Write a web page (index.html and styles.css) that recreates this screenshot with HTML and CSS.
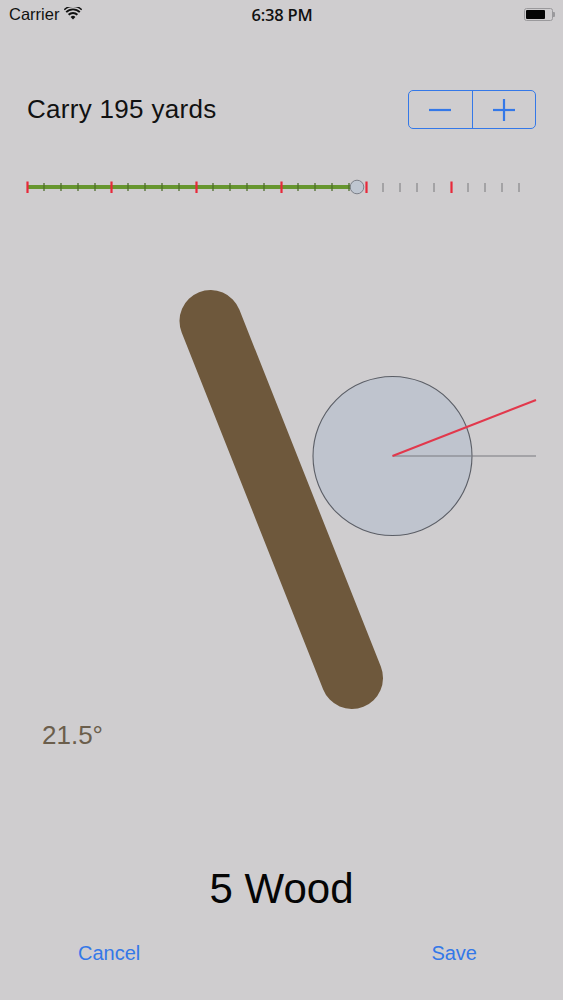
FILE: index.html
```html
<!DOCTYPE html>
<html>
<head>
<meta charset="utf-8">
<link rel="stylesheet" href="styles.css">
</head>
<body class="screen">
  <div class="statusbar">
    <div class="sb-left">
      <span class="carrier">Carrier</span>
      <svg class="wifi" width="18" height="13" viewBox="0 0 18 13">
        <path d="M9 12.5 L6.6 9.9 A3.4 3.4 0 0 1 11.4 9.9 Z" fill="#111"/>
        <path d="M4.6 7.8 A6.3 6.3 0 0 1 13.4 7.8" stroke="#111" stroke-width="1.9" fill="none"/>
        <path d="M2.2 5.2 A9.6 9.6 0 0 1 15.8 5.2" stroke="#111" stroke-width="1.9" fill="none"/>
        <path d="M0.3 2.8 A12.4 12.4 0 0 1 17.7 2.8" stroke="#111" stroke-width="1.6" fill="none"/>
      </svg>
    </div>
    <div class="sb-time">6:38 PM</div>
    <div class="sb-right">
      <div class="battery"><div class="battery-fill"></div></div>
      <div class="battery-tip"></div>
    </div>
  </div>

  <div class="header">
    <div class="carry">Carry 195 yards</div>
    <div class="stepper">
      <div class="step">
        <svg width="22" height="4" viewBox="0 0 22 4"><line x1="0" y1="2" x2="22" y2="2" stroke="#3478e8" stroke-width="2.2"/></svg>
      </div>
      <div class="step step-right">
        <svg width="22" height="22" viewBox="0 0 22 22"><line x1="0" y1="11" x2="22" y2="11" stroke="#3478e8" stroke-width="2.2"/><line x1="11" y1="0" x2="11" y2="22" stroke="#3478e8" stroke-width="2.2"/></svg>
      </div>
    </div>
  </div>

  <svg class="slider" width="563" height="24" viewBox="0 0 563 24">
    <line x1="27" y1="12" x2="357" y2="12" stroke="#67962f" stroke-width="4"/>
    <g stroke="#4f6e2c" stroke-width="1.3">
      <line x1="44" y1="8" x2="44" y2="16"/><line x1="61" y1="8" x2="61" y2="16"/><line x1="78" y1="8" x2="78" y2="16"/><line x1="95" y1="8" x2="95" y2="16"/>
      <line x1="128" y1="8" x2="128" y2="16"/><line x1="145" y1="8" x2="145" y2="16"/><line x1="162" y1="8" x2="162" y2="16"/><line x1="179" y1="8" x2="179" y2="16"/>
      <line x1="213" y1="8" x2="213" y2="16"/><line x1="230" y1="8" x2="230" y2="16"/><line x1="247" y1="8" x2="247" y2="16"/><line x1="264" y1="8" x2="264" y2="16"/>
      <line x1="298" y1="8" x2="298" y2="16"/><line x1="315" y1="8" x2="315" y2="16"/><line x1="332" y1="8" x2="332" y2="16"/><line x1="349" y1="8" x2="349" y2="16"/>
    </g>
    <g stroke="#8d8c8f" stroke-width="1.3">
      <line x1="383" y1="8" x2="383" y2="17"/><line x1="400" y1="8" x2="400" y2="17"/><line x1="417" y1="8" x2="417" y2="17"/><line x1="434" y1="8" x2="434" y2="17"/>
      <line x1="468" y1="8" x2="468" y2="17"/><line x1="485" y1="8" x2="485" y2="17"/><line x1="502" y1="8" x2="502" y2="17"/><line x1="519" y1="8" x2="519" y2="17"/>
    </g>
    <g stroke="#e8283a" stroke-width="2.2">
      <line x1="27.5" y1="6.5" x2="27.5" y2="18"/><line x1="111.5" y1="6.5" x2="111.5" y2="18"/><line x1="196.5" y1="6.5" x2="196.5" y2="18"/>
      <line x1="281.5" y1="6.5" x2="281.5" y2="18"/><line x1="366.5" y1="6.5" x2="366.5" y2="18"/><line x1="451.5" y1="6.5" x2="451.5" y2="18"/>
    </g>
    <circle cx="357" cy="12" r="6.8" fill="#bfc6d1" stroke="#7d8089" stroke-width="1"/>
  </svg>

  <svg class="stage" width="563" height="516" viewBox="0 0 563 516">
    <line x1="210.5" y1="122" x2="352" y2="479" stroke="#6e583c" stroke-width="62" stroke-linecap="round"/>
    <circle cx="392.5" cy="257" r="79.5" fill="#bfc4ce" stroke="#5b5e66" stroke-width="1.1"/>
    <line x1="392.5" y1="257" x2="536" y2="257" stroke="#7a7b80" stroke-width="1.2"/>
    <line x1="392.5" y1="257" x2="536" y2="201" stroke="#e2384c" stroke-width="2"/>
  </svg>

  <div class="angle">21.5°</div>
  <div class="club-name">5 Wood</div>
  <div class="actions">
    <span class="action action-cancel">Cancel</span>
    <span class="action action-save">Save</span>
  </div>
</body>
</html>
```
FILE: styles.css
```css
html, body {
  margin: 0;
  padding: 0;
}
.screen {
  width: 563px;
  height: 1000px;
  background: #cfcdcf;
  font-family: "Liberation Sans", Arial, sans-serif;
  color: #111;
  overflow: hidden;
}
.statusbar {
  height: 28px;
  display: flex;
  align-items: center;
  justify-content: space-between;
  padding: 1px 8px 0 9px;
  box-sizing: border-box;
  font-size: 16.5px;
  line-height: 27px;
}
.sb-left {
  width: 120px;
  display: flex;
  align-items: center;
  gap: 5px;
}
.wifi {
  margin-top: -2px;
}
.sb-time {
  font-weight: 600;
  font-size: 16.5px;
  font-family: "Open Sans", "Liberation Sans", sans-serif;
  letter-spacing: -0.2px;
}
.sb-right {
  width: 120px;
  display: flex;
  justify-content: flex-end;
  align-items: center;
}
.battery {
  width: 29px;
  height: 13px;
  border: 1px solid #9a999c;
  border-radius: 2.5px;
  box-sizing: border-box;
  padding: 1px;
  display: flex;
}
.battery-fill {
  width: 19px;
  background: #050505;
  border-radius: 1px;
}
.battery-tip {
  width: 2px;
  height: 5px;
  background: #9a999c;
  border-radius: 0 1px 1px 0;
}
.header {
  margin-top: 62px;
  height: 39px;
  display: flex;
  align-items: center;
  justify-content: space-between;
  padding: 0 27px 0 27px;
}
.carry {
  font-size: 26px;
  line-height: 39px;
  letter-spacing: 0.3px;
}
.stepper {
  width: 128px;
  height: 39px;
  box-sizing: border-box;
  border: 1.6px solid #3478e8;
  border-radius: 5px;
  display: flex;
}
.step {
  flex: 1;
  display: flex;
  align-items: center;
  justify-content: center;
}
.step-right {
  border-left: 1.6px solid #3478e8;
}
.slider {
  display: block;
  margin-top: 46px;
}
.stage {
  display: block;
}
.angle {
  font-size: 26px;
  line-height: 40px;
  height: 40px;
  padding-left: 42px;
  color: #6b5e4c;
}
.club-name {
  margin-top: 109px;
  font-size: 42px;
  line-height: 50px;
  text-align: center;
  color: #050505;
}
.actions {
  margin-top: 24px;
  display: flex;
  justify-content: space-between;
  padding: 0 86px 0 78px;
  font-size: 20px;
  line-height: 30px;
  color: #3478e8;
}
```
